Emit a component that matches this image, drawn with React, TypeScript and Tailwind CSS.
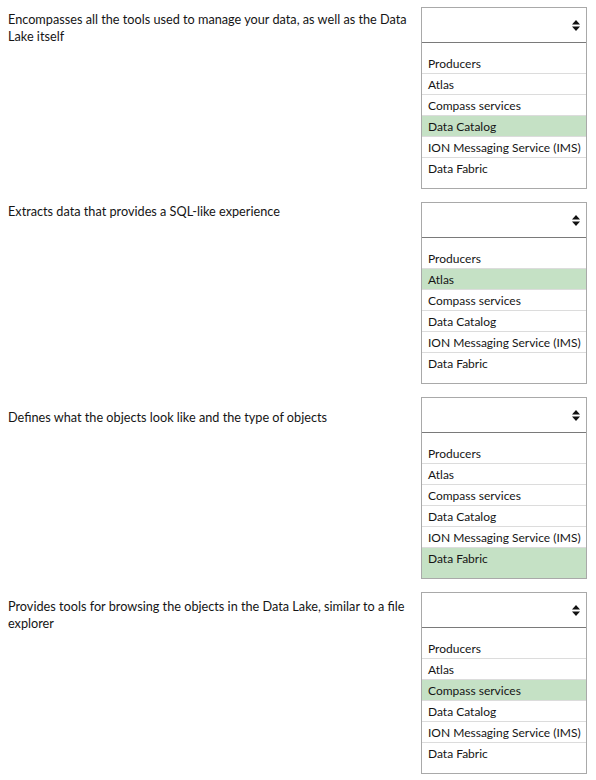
import React from "react";

const OPTIONS = [
  "Producers",
  "Atlas",
  "Compass services",
  "Data Catalog",
  "ION Messaging Service (IMS)",
  "Data Fabric",
];

const QUESTIONS: { text: string; selected: number; pt: string }[] = [
  {
    text: "Encompasses all the tools used to manage your data, as well as the Data Lake itself",
    selected: 3,
    pt: "pt-[4px]",
  },
  { text: "Extracts data that provides a SQL-like experience", selected: 1, pt: "pt-[1px]" },
  { text: "Defines what the objects look like and the type of objects", selected: 5, pt: "pt-[12px]" },
  {
    text: "Provides tools for browsing the objects in the Data Lake, similar to a file explorer",
    selected: 2,
    pt: "pt-[6px]",
  },
];

function SortIcon() {
  return (
    <svg width="8" height="11" viewBox="0 0 8 11" className="block">
      <path d="M0 4.6 L4 0 L8 4.6 Z" fill="#111" />
      <path d="M0 6.4 L8 6.4 L4 11 Z" fill="#111" />
    </svg>
  );
}

function Box({ selected }: { selected: number }) {
  return (
    <div className="w-[166px] h-[182px] shrink-0 border border-[#a9a9a9] flex flex-col bg-white">
      <div className="h-[35px] border-b border-[#7a7a7a] flex items-center justify-end pr-[6px]">
        <SortIcon />
      </div>
      <div className="pt-[10px] flex flex-col flex-1">
        {OPTIONS.map((o, i) => {
          const last = i === OPTIONS.length - 1;
          const sel = i === selected;
          return (
            <div
              key={o}
              className={
                (last ? "flex-1 pt-[2px] " : "h-[21px] border-b border-[#dcdcdc] flex items-center ") +
                (sel ? "bg-[#c5e1c5] " : "") +
                "px-[6px] text-[12px] leading-[17px] text-[#151515] whitespace-nowrap"
              }
            >
              {o}
            </div>
          );
        })}
      </div>
    </div>
  );
}

export default function App() {
  return (
    <div
      className="w-[596px] h-[780px] bg-white flex flex-col gap-[13px] pt-[7px]"
      style={{ fontFamily: "Lato, 'Open Sans', sans-serif" }}
    >
      {QUESTIONS.map((q, i) => (
        <div key={i} className="flex items-start pr-[9px]">
          <div className={"flex-1 pl-[8px] pr-[8px] text-[12.7px] leading-[17px] text-[#151515] " + q.pt}>
            {q.text}
          </div>
          <Box selected={q.selected} />
        </div>
      ))}
    </div>
  );
}
